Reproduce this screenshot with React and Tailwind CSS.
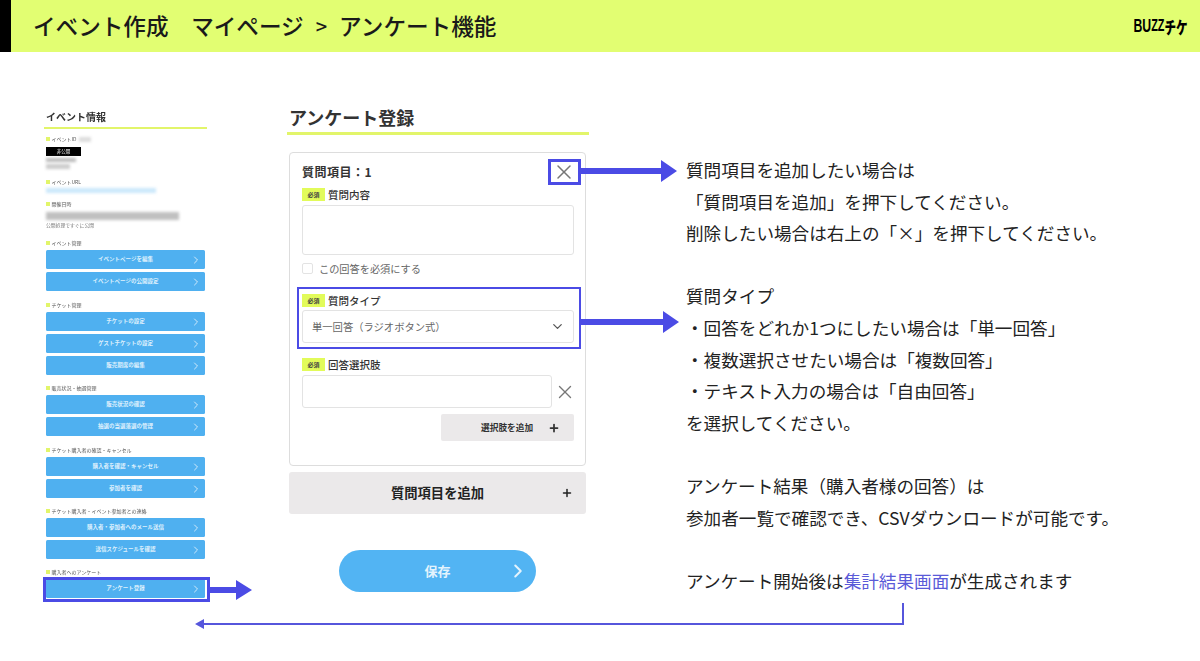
import { ChevronRight, ChevronDown, Plus, X } from "lucide-react";

const jp = "font-['Noto_Sans_CJK_JP','Noto_Sans',sans-serif]";

const groups = [
    { label: "イベント管理", top: "mt-[10px]", buttons: ["イベントページを編集", "イベントページの公開設定"] },
    { label: "チケット管理", top: "mt-[10px]", buttons: ["チケットの設定", "ゲストチケットの設定", "販売期席の編集"] },
    { label: "販売状況・抽選管理", top: "mt-[9px]", buttons: ["販売状況の確認", "抽選の当選落選の管理"] },
    { label: "チケット購入者の確認・キャンセル", top: "mt-[10px]", buttons: ["購入者を確認・キャンセル", "参加者を確認"] },
    { label: "チケット購入者・イベント参加者との連絡", top: "mt-[9px]", buttons: ["購入者・参加者へのメール送信", "送信スケジュールを確認"] },
    { label: "購入者へのアンケート", top: "mt-[9px]", buttons: ["アンケート登録"] },
];

function SideLabel({ children, className = "" }) {
    return (
        <div className={`flex items-center gap-[2px] h-[8px] text-[5px] leading-[8px] text-[#555] ${className}`}>
            <span className="w-[3.5px] h-[3.5px] bg-[#e2f56a]" />
            {children}
        </div>
    );
}

function SideButton({ children }) {
    return (
        <div className="relative flex items-center justify-center h-[19px] rounded-[1.5px] bg-[#4fb0f0] text-[5.5px] font-bold text-[#dff1fd]">
            <span>{children}</span>
            <ChevronRight className="absolute right-[3px] w-[12px] h-[12px] text-[#cfe9fb]" strokeWidth={2} />
        </div>
    );
}

function Sidebar() {
    return (
        <aside className="w-[163px] ml-[44px] pt-[58px] blur-[0.3px]">
            <h2 className="pl-[2px] text-[10px] leading-[14px] font-bold text-[#333]">イベント情報</h2>
            <div className="mt-[3px] h-[2px] bg-[#e2f56a]" />
            <div className="pl-[2px] pr-[2px]">
                <div className="mt-[6px] flex items-center">
                    <SideLabel>イベントID</SideLabel>
                    <div className="ml-[3px] w-[12px] h-[5px] bg-[#ddd] blur-[1.5px]" />
                </div>
                <div className="mt-[4px] w-[35px] h-[9px] bg-black text-white text-[4.5px] leading-[9px] text-center">非公開</div>
                <div className="mt-[2px] w-[30px] h-[4px] bg-[#bbb] blur-[1.5px]" />
                <div className="mt-[2px] w-[24px] h-[5px] bg-[#ccc] blur-[1.5px]" />
                <SideLabel className="mt-[9px]">イベントURL</SideLabel>
                <div className="mt-[2px] w-[110px] h-[5px] bg-[#cbe8fb] blur-[1.5px]" />
                <SideLabel className="mt-[7px]">開催日時</SideLabel>
                <div className="mt-[4px] w-[133px] h-[8px] bg-[#c0c0c0] blur-[1.5px]" />
                <div className="mt-[1px] h-[8px] text-[4.8px] leading-[8px] text-[#777]">公開処理ですぐに公開</div>
                {groups.map((g) => (
                    <div key={g.label} className={g.top}>
                        <SideLabel>{g.label}</SideLabel>
                        <div className="mt-[3px] flex flex-col gap-[3px]">
                            {g.buttons.map((b) => (
                                <SideButton key={b}>{b}</SideButton>
                            ))}
                        </div>
                    </div>
                ))}
            </div>
        </aside>
    );
}

function Tag() {
    return (
        <span className="flex items-center justify-center w-[23px] h-[13px] bg-[#e2fb5a] text-[6px] font-bold text-[#444]">必須</span>
    );
}

function FieldLabel({ children }) {
    return (
        <div className="flex items-center gap-[3px] h-[13px] text-[10.5px] font-medium text-[#333]">
            <Tag />
            {children}
        </div>
    );
}

function SurveyForm() {
    return (
        <section className="w-[302px] ml-[80px] pt-[52px]">
            <h2 className="pl-[2px] h-[26px] text-[18px] leading-[26px] font-bold text-[#333]">アンケート登録</h2>
            <div className="mt-[2px] h-[3px] bg-[#e2f56a]" />
            <div className="mt-[17px] ml-[2px] w-[297px] h-[314px] rounded-[4px] border border-[#ddd] px-[12px] pt-[10px]">
                <div className="flex items-center justify-between h-[18px]">
                    <span className="text-[12px] font-bold tracking-[0.5px] text-[#333]">質問項目：1</span>
                    <X className="mr-[-3px] w-[24px] h-[24px] text-[#777]" strokeWidth={1.5} />
                </div>
                <div className="mt-[7px]"><FieldLabel>質問内容</FieldLabel></div>
                <div className="mt-[4px] h-[50px] w-[272px] rounded-[3px] border border-[#e3e3e3]" />
                <div className="mt-[8px] flex items-center gap-[6px] h-[11px] text-[10.2px] text-[#666]">
                    <span className="w-[11px] h-[11px] rounded-[2px] border border-[#e3e3e3]" />
                    この回答を必須にする
                </div>
                <div className="mt-[20px]"><FieldLabel>質問タイプ</FieldLabel></div>
                <div className="mt-[3px] flex items-center justify-between h-[33px] w-[272px] rounded-[3px] border border-[#e3e3e3] pl-[9px] pr-[8px] text-[10.3px] text-[#666]">
                    単一回答（ラジオボタン式）
                    <ChevronDown className="w-[15px] h-[15px] text-[#555]" strokeWidth={2} />
                </div>
                <div className="mt-[15px]"><FieldLabel>回答選択肢</FieldLabel></div>
                <div className="mt-[4px] flex items-center justify-between w-[272px]">
                    <div className="h-[33px] w-[250px] rounded-[3px] border border-[#e3e3e3]" />
                    <X className="mr-[-2px] w-[22px] h-[22px] text-[#777]" strokeWidth={1.5} />
                </div>
                <div className="mt-[6px] ml-auto flex items-center w-[133px] h-[27px] rounded-[2px] bg-[#ebe9ea] text-[8.7px] font-bold text-[#333] mr-[-1px]">
                    <span className="ml-[40px]">選択肢を追加</span>
                    <Plus className="ml-[15px] w-[12px] h-[12px]" strokeWidth={3.5} />
                </div>
            </div>
            <div className="relative mt-[6px] ml-[2px] flex items-center justify-center w-[297px] h-[42px] rounded-[3px] bg-[#ebe9ea] text-[13.3px] font-bold text-[#222]">
                質問項目を追加
                <Plus className="absolute right-[13px] w-[12px] h-[12px]" strokeWidth={3} />
            </div>
            <div className="relative mt-[36px] ml-[52px] flex items-center justify-center w-[197px] h-[42px] rounded-full bg-[#52b4f3] text-[13px] font-bold text-[#e3f3fd]">
                保存
                <ChevronRight className="absolute right-[7px] w-[22px] h-[22px]" strokeWidth={2.2} />
            </div>
        </section>
    );
}

function Notes() {
    const lines = [
        "質問項目を追加したい場合は",
        "「質問項目を追加」を押下してください。",
        "削除したい場合は右上の「×」を押下してください。",
        "",
        "質問タイプ",
        "・回答をどれか1つにしたい場合は「単一回答」",
        "・複数選択させたい場合は「複数回答」",
        "・テキスト入力の場合は「自由回答」",
        "を選択してください。",
        "",
        "アンケート結果（購入者様の回答）は",
        "参加者一覧で確認でき、CSVダウンロードが可能です。",
        "",
    ];
    return (
        <section className="ml-[97px] pt-[102px] text-[17.6px] leading-[31.6px] text-[#222] whitespace-nowrap">
            {lines.map((l, i) => (
                <div key={i} className="h-[31.6px]">{l}</div>
            ))}
            <div>
                アンケート開始後は<span className="text-[#5a5ad8]">集計結果画面</span>が生成されます
            </div>
        </section>
    );
}

export default function App() {
    return (
        <div className={`relative w-[1200px] h-[661px] overflow-hidden bg-white ${jp}`}>
            <header className="flex items-center h-[52px] bg-[#e2fe72] border-l-[11px] border-black pl-[22px] pr-[12px]">
                <h1 className="flex items-center text-[22.6px] font-medium text-[#1a1a1a] whitespace-pre">
                    イベント作成　マイページ
                    <span className="mx-[12px] text-[20px]">&gt;</span>
                    アンケート機能
                </h1>
                <div className="ml-auto flex items-center font-['Liberation_Sans',sans-serif] font-bold leading-none text-black scale-x-[0.68] origin-right">
                    <span className="text-[18px]">BU</span>
                    <span className="text-[16px]">ZZ</span>
                    <span className={`${jp} font-black text-[17px]`}>チケ</span>
                </div>
            </header>
            <main className="flex items-start">
                <Sidebar />
                <SurveyForm />
                <Notes />
            </main>

            {/* highlight frames */}
            <div className="absolute left-[43px] top-[577px] w-[167px] h-[25px] border-[3px] border-[#4b4be5]" />
            <div className="absolute left-[548px] top-[159px] w-[33px] h-[26px] border-[3px] border-[#4b4be5]" />
            <div className="absolute left-[297px] top-[287px] w-[284px] h-[62px] border-[2.5px] border-[#4b4be5]" />

            {/* arrows */}
            <svg className="absolute inset-0 pointer-events-none" width="1200" height="661" fill="#4b4be5">
                <path d="M581 168h80v-8l16 11-16 11v-8h-80z" />
                <path d="M581 319h82v-8l16 11-16 11v-8h-82z" />
                <path d="M209 587h27v-7l16 10-16 10v-7h-27z" />
                <path fill="#5656dc" d="M902 603h2v22H204v4l-9-5 9-5v4h698z" />
            </svg>
        </div>
    );
}
